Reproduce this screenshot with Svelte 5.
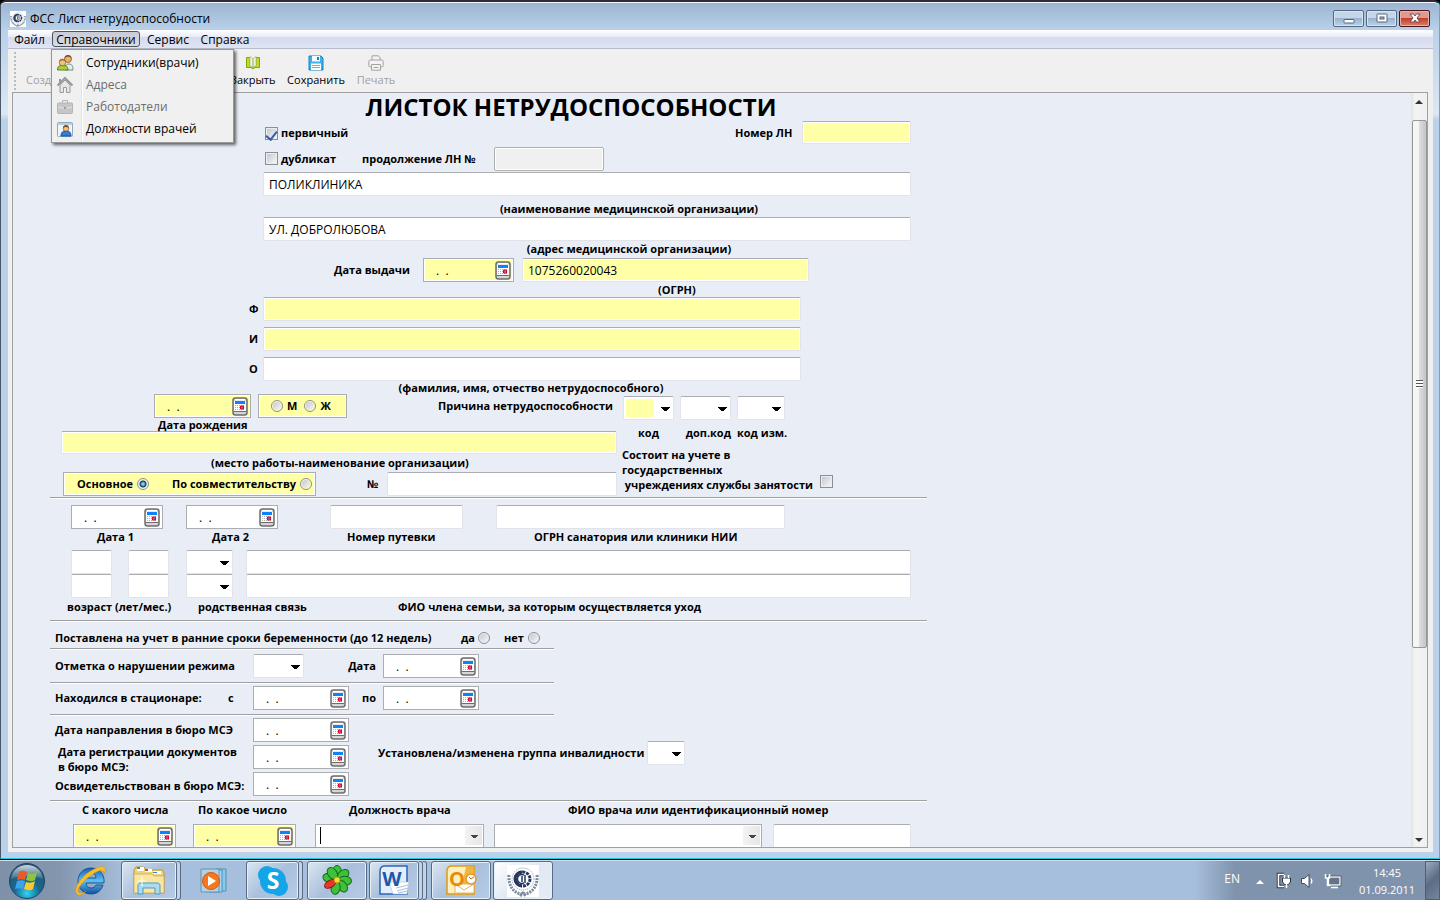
<script>
  const menus = ['Сервис', 'Справка'];
  const items = [
    { text: 'Сотрудники(врачи)', icon: 'people', off: false },
    { text: 'Адреса', icon: 'home', off: true },
    { text: 'Работодатели', icon: 'case', off: true },
    { text: 'Должности врачей', icon: 'card', off: false }
  ];
  let primary = $state(true);
  let job = $state('main');
</script>

{#snippet emblem(size)}
  <svg width={size} height={size} viewBox="0 0 32 32" aria-hidden="true">
    <rect width="32" height="32" fill="#fff" />
    <circle cx="16" cy="14" r="11" fill="none" stroke="#8d95a8" stroke-width="1" stroke-dasharray="1 1" />
    <circle cx="16" cy="14" r="7" fill="none" stroke="#26375f" stroke-width="3" stroke-dasharray="3 1" />
    <circle cx="15" cy="14" r="7" fill="none" stroke="#26375f" stroke-width="3" stroke-dasharray="22 44" transform="rotate(90 15 14)" />
    <path d="M17 10a4.500 4.500 0 1 0 0 8M15 11v6M18 10v8" fill="none" stroke="#26375f" stroke-width="1.500" />
    <path d="M2 10C1 20 6 28 15 29M30 10C31 20 26 28 17 29M13 31l3-3 3 3" fill="none" stroke="#7d879f" stroke-width="3" stroke-dasharray="2 1" />
  </svg>
{/snippet}

{#snippet date(name, yellow = false)}
  <span class="date" class:yellow>
    <input type="text" aria-label={name} value=" .  ." />
    <button type="button" aria-label="Календарь">
      <svg width="16" height="19" viewBox="0 0 16 19">
        <rect x="1" y="1" width="14" height="17" rx="2.500" fill="#d6d6d6" stroke="#6e6e6e" stroke-width="1.500" />
        <rect x="3" y="2" width="10" height="1.500" fill="#fff" />
        <rect x="2" y="4" width="12" height="10" fill="#fff" />
        <rect x="3" y="4" width="10" height="3" fill="#0a84f8" />
        <path d="M3 8.500h9M3 10.500h9M3 12.500h9" stroke="#b0b0b0" stroke-dasharray="1 1" />
        <rect x="8.500" y="9" width="3" height="3" rx=".5" fill="#5f7fe0" stroke="#f00018" stroke-width="1.200" />
        <path d="M1.500 14.500h13" stroke="#6e6e6e" />
      </svg>
    </button>
  </span>
{/snippet}

{#snippet stack()}<i class="stack"></i>{/snippet}

<div class="desktop">
  <div class="window">
    <header class="title">
      {@render emblem(16)}
      <span>ФСС Лист нетрудоспособности</span>
      <div class="controls">
        <button type="button" aria-label="Свернуть"><svg width="12" height="14" viewBox="0 0 12 14"><rect x="1" y="8.500" width="10" height="3.500" rx=".5" fill="#fff" stroke="#56657c" /></svg></button>
        <button type="button" aria-label="Развернуть"><svg width="12" height="14" viewBox="0 0 12 14"><rect x="1" y="3" width="10" height="8" rx=".5" fill="#fff" stroke="#56657c" /><rect x="4" y="6" width="4" height="2" fill="#9db5d0" stroke="#56657c" /></svg></button>
        <button type="button" class="close" aria-label="Закрыть окно"><svg width="12" height="14" viewBox="0 0 12 14"><path d="M1 3h3.500L6 5l1.500-2H11L8 7l3 4H7.500L6 9l-1.500 2H1l3-4z" fill="#fff" stroke="#5b4a55" stroke-width=".9" /></svg></button>
      </div>
    </header>

    <div class="client">
      <nav class="menubar">
        <button type="button">Файл</button>
        <div class="open">
          <button type="button" aria-expanded="true">Справочники</button>
          <div class="popup" role="menu">
            {#each items as item}
              <button type="button" role="menuitem" disabled={item.off}>
                <svg width="18" height="18" viewBox="0 0 18 18">
                  {#if item.icon === 'people'}
                    <path d="M9 16c0-4 1-6 4-6s4 2 4 6z" fill="#e4efe9" stroke="#6c8f86" />
                    <circle cx="12" cy="5" r="3.500" fill="#e8b46c" stroke="#6b4320" stroke-width=".7" />
                    <path d="M8.500 4C9 0 15 0 15.500 4 13 2 11 2 8.500 4z" fill="#7a4d22" />
                    <path d="M1.500 16c0-3.500 1-4.500 5-4.500s5.500 1 5.500 4.500z" fill="#a7cf3e" stroke="#5e8417" />
                    <circle cx="6.500" cy="8.500" r="3.300" fill="#f0c27e" stroke="#8a5a25" stroke-width=".7" />
                    <path d="M3 8C3 3.500 9.500 3.500 10 8 8 6 5 6 3 8z" fill="#a86d2c" />
                  {:else if item.icon === 'home'}
                    <path d="M4 9v7.500h3.500v-5h3v5H14V9L9 4z" fill="#e6e6e6" stroke="#9a9a9a" />
                    <path d="M1.500 9.500L9 2l7.500 7.500" fill="none" stroke="#9a9a9a" stroke-width="2" />
                    <path d="M4 3v3" stroke="#9a9a9a" stroke-width="2" />
                  {:else if item.icon === 'case'}
                    <path d="M6.500 5V2.500h5V5" fill="none" stroke="#b4b4b4" />
                    <rect x="1.500" y="5" width="15" height="10.500" rx="1" fill="#c6c6c6" stroke="#b4b4b4" />
                    <path d="M2 9c4 1.500 10 1.500 14 0" fill="none" stroke="#e4e4e4" />
                    <rect x="8" y="9" width="2" height="2" fill="#9b9b9b" />
                  {:else}
                    <rect x="1.500" y="2.500" width="15" height="14" rx="1" fill="#eef6fd" stroke="#8fa9bd" />
                    <path d="M2 4h14" stroke="#b9cfe0" stroke-width="2" />
                    <path d="M5 16c0-4 2-5 5-5s5 1 5 5z" fill="#2f7fd6" stroke="#16539b" />
                    <circle cx="10" cy="8.500" r="2.800" fill="#f0c27e" stroke="#7a4d22" stroke-width=".7" />
                    <path d="M7 8c0-4 6-4 6 0-2-1.500-4-1.500-6 0z" fill="#7a4d22" />
                  {/if}
                </svg>
                <span>{item.text}</span>
              </button>
            {/each}
          </div>
        </div>
        {#each menus as m}<button type="button">{m}</button>{/each}
      </nav>

      <div class="toolbar">
        <i class="grip"></i>
        <button type="button" class="create" disabled>Создать</button>
        <button type="button">
          <svg width="16" height="16" viewBox="0 0 16 16"><path d="M1.500 2.500v10H6l2 1.500 2-1.500h4.500v-10H11v8.500l-3 1-3-1V2.500z" fill="#c2dc22" stroke="#7da80c" /><path d="M5 1.500L7.500 3v9L5 11zM11 1.500L8.500 3v9l2.500-1z" fill="#f2f4e6" stroke="#b3bf7a" stroke-width=".7" /></svg>
          Закрыть
        </button>
        <button type="button">
          <svg width="16" height="16" viewBox="0 0 16 16"><path d="M1 1h12l2 2v12H1z" fill="#3eb0ea" stroke="#1683c4" /><path d="M4 1h8v5.500H4z" fill="#f4fbff" /><path d="M9 2h2v3H9z" fill="#1683c4" /><path d="M3 8.500h10V15H3z" fill="#fff" /><path d="M4 10.500h8M4 12.500h8" stroke="#5ab6e2" /></svg>
          Сохранить
        </button>
        <button type="button" disabled>
          <svg width="16" height="16" viewBox="0 0 16 16" fill="#f3f3f3" stroke="#a2a2a2"><path d="M4 5V.8h6.500L12 2.500V5" /><rect x=".8" y="5" width="14.400" height="7" rx="1.500" /><path d="M3.500 9.500h9v5.700h-9zM5.500 12.500h5" /></svg>
          Печать
        </button>
      </div>

      <main class="pane">
        <form class="sheet" autocomplete="off">
          <h1>ЛИСТОК НЕТРУДОСПОСОБНОСТИ</h1>

          <div class="row first">
            <input id="prim" type="checkbox" bind:checked={primary} />
            <label for="prim">первичный</label>
            <label for="num">Номер ЛН</label>
            <input id="num" class="yellow" type="text" />
          </div>
          <div class="row second">
            <input id="dup" type="checkbox" />
            <label for="dup">дубликат</label>
            <label for="cont">продолжение ЛН №</label>
            <input id="cont" type="text" disabled />
          </div>

          <div class="org">
            <input id="org" type="text" value="ПОЛИКЛИНИКА" />
            <label class="cap tall" for="org">(наименование медицинской организации)</label>
            <input id="addr" type="text" value="УЛ. ДОБРОЛЮБОВА" />
            <label class="cap" for="addr">(адрес медицинской организации)</label>
          </div>

          <div class="row issue">
            <span>Дата выдачи</span>
            {@render date('Дата выдачи', true)}
            <input id="ogrn" class="yellow" type="text" value="1075260020043" />
          </div>
          <label class="ogrn-cap" for="ogrn">(ОГРН)</label>

          <div class="person">
            <label for="f">Ф</label><input id="f" class="yellow" type="text" />
            <label for="i">И</label><input id="i" class="yellow" type="text" />
            <label for="o">О</label><input id="o" type="text" />
          </div>
          <p class="fio-cap">(фамилия, имя, отчество нетрудоспособного)</p>

          <section class="work">
            <div class="work-left">
              <div class="row birth">
                {@render date('Дата рождения', true)}
                <div class="box sex">
                  <input id="m" type="radio" name="sex" /><label for="m">М</label>
                  <input id="w" type="radio" name="sex" /><label for="w">Ж</label>
                </div>
                <span>Причина нетрудоспособности</span>
              </div>
              <p class="birth-cap">Дата рождения</p>
              <input id="emp" class="yellow emp" type="text" />
              <label class="emp-cap" for="emp">(место работы-наименование организации)</label>
              <div class="row job">
                <div class="box kind">
                  <label for="main">Основное</label>
                  <input id="main" type="radio" name="job" value="main" bind:group={job} />
                  <label for="part">По совместительству</label>
                  <input id="part" type="radio" name="job" value="part" bind:group={job} />
                </div>
                <label for="jobnum">№</label>
                <input id="jobnum" type="text" />
              </div>
            </div>
            <div class="work-right">
              <div class="codes">
                <select id="c1" class="code-y"><option></option></select>
                <select id="c2"><option></option></select>
                <select id="c3"><option></option></select>
                <label for="c1">код</label>
                <label for="c2">доп.код</label>
                <label for="c3">код изм.</label>
              </div>
              <div class="service">
                <label for="srv">Состоит на учете в<br />государственных<br />&nbsp;учреждениях службы занятости</label>
                <input id="srv" type="checkbox" />
              </div>
            </div>
          </section>

          <hr />
          <div class="row four">
            {@render date('Дата 1')}
            {@render date('Дата 2')}
            <input id="voucher" type="text" />
            <input id="clinic" type="text" />
          </div>
          <div class="row four-cap">
            <span>Дата 1</span><span>Дата 2</span>
            <label for="voucher">Номер путевки</label>
            <label for="clinic">ОГРН санатория или клиники НИИ</label>
          </div>

          <div class="family">
            {#each [1, 2] as n}
              <input class="age" type="text" aria-label="Возраст, лет {n}" />
              <input class="age" type="text" aria-label="Возраст, мес. {n}" />
              <select aria-label="Родственная связь {n}"><option></option></select>
              <input type="text" aria-label="ФИО члена семьи {n}" />
            {/each}
          </div>
          <div class="row family-cap">
            <span>возраст (лет/мес.)</span><span>родственная связь</span><span>ФИО члена семьи, за которым осуществляется уход</span>
          </div>

          <hr />
          <div class="row early">
            <span>Поставлена на учет в ранние сроки беременности (до 12 недель)</span>
            <label for="yes">да</label><input id="yes" type="radio" name="early" />
            <label for="no">нет</label><input id="no" type="radio" name="early" />
          </div>
          <hr class="short" />
          <div class="row period">
            <label for="viol">Отметка о нарушении режима</label><span></span>
            <select id="viol"><option></option></select>
            <span>Дата</span>
            {@render date('Дата нарушения')}
          </div>
          <hr class="short" />
          <div class="row period stay">
            <span>Находился в стационаре:</span><span>с</span>
            {@render date('В стационаре с')}
            <span>по</span>
            {@render date('В стационаре по')}
          </div>
          <hr class="short" />
          <section class="mse">
            <span>Дата направления в бюро МСЭ</span>
            {@render date('Дата направления')}
            <span></span><span></span>
            <span class="low two">Дата регистрации документов<br />в бюро МСЭ:</span>
            {@render date('Дата регистрации')}
            <label class="high" for="grp">Установлена/изменена группа инвалидности</label>
            <select class="high" id="grp"><option></option></select>
            <span class="low">Освидетельствован в бюро МСЭ:</span>
            {@render date('Дата освидетельствования')}
          </section>
          <hr />
          <div class="row doc-cap">
            <span>С какого числа</span><span>По какое число</span><label for="post">Должность врача</label><label for="doc">ФИО врача или идентификационный номер</label>
          </div>
          <div class="row doc">
            {@render date('С какого числа', true)}
            {@render date('По какое число', true)}
            <span class="combo caret"><select id="post"><option></option></select></span>
            <span class="combo"><select id="doc"><option></option></select></span>
            <input type="text" aria-label="Идентификационный номер" />
          </div>
        </form>

        <div class="scroll" aria-hidden="true">
          <i class="up"></i>
          <div class="thumb"><i></i></div>
          <i class="down"></i>
        </div>
      </main>
    </div>
  </div>

  <footer class="taskbar">
    <button type="button" class="start" aria-label="Пуск">
      <svg width="38" height="38" viewBox="0 0 38 38">
        <defs>
          <radialGradient id="orb" cx=".5" cy=".85" r=".8"><stop offset="0" stop-color="#2fd3f4" /><stop offset=".45" stop-color="#17688f" /><stop offset="1" stop-color="#2b5272" /></radialGradient>
          <linearGradient id="gl" x2="0" y2="1"><stop offset="0" stop-color="#fff" stop-opacity=".75" /><stop offset="1" stop-color="#fff" stop-opacity=".1" /></linearGradient>
        </defs>
        <circle cx="19" cy="19" r="17.500" fill="url(#orb)" stroke="#1b4560" />
        <path d="M3 17C4 8 11 3 19 3s15 5 16 14c-8-4-24-4-32 0z" fill="url(#gl)" />
        <path d="M11 10c3-2 5-1 8 0l-2 8c-3-1-5-1-8 0z" fill="#ee5a24" />
        <path d="M20 11c3 1 6 1 9-1l-2 8c-3 2-6 1-9 0z" fill="#8cc63f" />
        <path d="M9 19c3-1 5-1 8 0l-2 8c-3-1-5-1-8 0z" fill="#3fa2e8" />
        <path d="M18 20c3 1 6 1 9-1l-2 8c-3 2-6 1-9 0z" fill="#fdc82f" />
      </svg>
    </button>
    <button type="button" class="plain ie" aria-label="Internet Explorer">
      <svg width="34" height="34" viewBox="0 0 34 34">
        <defs><linearGradient id="ieb" x2="0" y2="1"><stop offset="0" stop-color="#1a5fb4" /><stop offset=".5" stop-color="#5cc1f5" /><stop offset="1" stop-color="#114e9e" /></linearGradient></defs>
        <path d="M18 4C10 4 5 10 5 17s5 13 13 13c6 0 10-3 12-9h-7c-1 2-3 3-5 3-3 0-5-2-5-5h18C32 10 26 4 18 4zM13 14c0-3 2-5 5-5s5 2 5 5z" fill="url(#ieb)" stroke="#0c4284" stroke-width=".8" />
        <path d="M5 31C-1 27 6 15 16 8 24 3 31 1 32 4c1 2 0 4-1 6 1-6-6-4-14 2C8 19 1 29 8 29c2 0 4-1 5-2-2 3-6 5-8 4z" fill="#f6bf2c" stroke="#c98d10" stroke-width=".5" />
      </svg>
    </button>
    <button type="button" class="task" aria-label="Проводник">
      <svg width="34" height="34" viewBox="0 0 34 34">
        <path d="M2 6l2-3h8l2 3h16l2 2v21H2z" fill="#eed27c" stroke="#b9953b" />
        <path d="M5 3h7v4H5z" fill="#fff" /><path d="M5 3h3v2H5z" fill="#2fa84a" /><path d="M13 5h7v3h-7z" fill="#fff" /><path d="M13 5h3v2h-3z" fill="#d4472f" /><path d="M21 7h8v3h-8z" fill="#fff" /><path d="M21 8h4v1h-4z" fill="#2b84d6" />
        <path d="M2 10h18l2 2h10v17H2z" fill="#f8e6a2" stroke="#c7a650" stroke-width=".7" />
        <path d="M6 30V22c0-2 1-3 3-3h16c2 0 3 1 3 3v8h-5v-6H11v6z" fill="#a9dcf2" stroke="#4e9cc0" />
        <path d="M10 13v9M6 17h8" stroke="#fff" />
      </svg>
    </button>
    {@render stack()}
    <button type="button" class="plain wmp" aria-label="Проигрыватель">
      <svg width="32" height="32" viewBox="0 0 32 32">
        <path d="M18 4h10v22H18z" fill="#8ec7e6" stroke="#4d92b8" /><path d="M11 5h13v22H11z" fill="#a9d6ee" stroke="#4d92b8" /><path d="M3 4h18v23H3z" fill="#b6cfe2" stroke="#6292b3" />
        <circle cx="13" cy="16" r="8.500" fill="#f5781e" stroke="#d65a0b" /><path d="M10 11v10l8-5z" fill="#fff" />
      </svg>
    </button>
    <button type="button" class="task skype" aria-label="Skype">
      <svg width="32" height="32" viewBox="0 0 32 32">
        <circle cx="10" cy="10" r="9" fill="#12a5e8" /><circle cx="22" cy="22" r="9" fill="#12a5e8" /><circle cx="16" cy="16" r="13" fill="#12a5e8" />
        <text x="16" y="24" text-anchor="middle" font-size="23" font-weight="bold" fill="#fff">S</text>
      </svg>
    </button>
    {@render stack()}
    <button type="button" class="task gap" aria-label="ICQ">
      <svg width="34" height="34" viewBox="0 0 34 34">
        {#each [0, 50, 95, 140, 190, 285, 325] as a}
          <ellipse cx="17" cy="8" rx="4.500" ry="6.500" fill="#3ec13a" stroke="#146a17" transform="rotate({a} 17 16)" />
        {/each}
        <ellipse cx="17" cy="8" rx="3.500" ry="6" fill="#e8362b" stroke="#8d150f" transform="rotate(240 17 16)" />
        <circle cx="17" cy="16" r="3" fill="#ffd83a" stroke="#c98d10" />
      </svg>
    </button>
    <button type="button" class="task narrow" aria-label="Word">
      <svg width="34" height="34" viewBox="0 0 34 34">
        <path d="M8 2h22v28H3V7c0-3 2-5 5-5z" fill="#e4eefb" stroke="#2b66b8" stroke-width="1.500" /><path d="M12 18h20l-2 12H16z" fill="#fff" stroke="#a8bddb" stroke-width=".6" />
        <path d="M19 24l12-3M20 27l11-3M21 29l9-2" stroke="#a8bddb" />
        <text x="15" y="22" text-anchor="middle" font-size="20" font-weight="bold" fill="#1d57a8">W</text>
      </svg>
    </button>
    {@render stack()}{@render stack()}
    <button type="button" class="task gap" aria-label="Outlook">
      <svg width="34" height="34" viewBox="0 0 34 34">
        <path d="M8 2h22v28H3V7c0-3 2-5 5-5z" fill="#fdf0c0" stroke="#e09b12" stroke-width="1.500" /><path d="M22 3h7v26H16z" fill="#f4b63a" /><path d="M11 20h19v9H11z" fill="#fff" stroke="#e3b45a" /><path d="M11 20l9 6 10-6" fill="none" stroke="#e3b45a" />
        <circle cx="27" cy="15" r="5" fill="#fff" stroke="#e2972a" stroke-width="1.500" /><path d="M25 13l2 2 3-2" fill="none" stroke="#b8701c" />
        <text x="13" y="22" text-anchor="middle" font-size="20" font-weight="bold" fill="#e88a0c">O</text>
      </svg>
    </button>
    <button type="button" class="task active" aria-label="ФСС">{@render emblem(32)}</button>

    <div class="tray">
      <span class="lang">EN</span>
      <i class="more"></i>
      <svg width="16" height="18" viewBox="0 0 16 18"><path d="M8 2.500H2.500v12H8" fill="none" stroke="#2a3542" stroke-width="3.500" /><path d="M8 2.500H2.500v12H8" fill="none" stroke="#fff" stroke-width="1.600" /><path d="M6.500 6h8v4l-2 2.500h-4l-2-2.500z" fill="#fff" stroke="#2a3542" /><path d="M8.500 3v3M12.500 3v3M10.500 12v4" stroke="#fff" stroke-width="1.500" /></svg>
      <svg width="16" height="18" viewBox="0 0 16 18"><path d="M1.500 6.500h3L9 2.500v13l-4.500-4h-3z" fill="#fff" stroke="#3c4a5c" /><path d="M11 6.500c1 1.500 1 3.500 0 5" fill="none" stroke="#fff" stroke-width="1.300" /></svg>
      <svg width="17" height="18" viewBox="0 0 17 18"><rect x="4.500" y="5" width="11.500" height="8" fill="#6d7f95" stroke="#2a3542" stroke-width="2.500" /><rect x="4.500" y="5" width="11.500" height="8" fill="#61748b" stroke="#fff" stroke-width="1.300" /><path d="M7 15.500h7" stroke="#fff" stroke-width="1.600" /><path d="M1.500 2v4h4V2M3.500 6v7.500h3" fill="none" stroke="#fff" stroke-width="1.500" /></svg>
      <div class="clock"><span>14:45</span><span>01.09.2011</span></div>
    </div>
    <i class="peek"></i>
  </footer>
</div>

<style>
  :global(body) { margin: 0; background: #000; }
  .desktop { display: flex; flex-direction: column; height: 100vh; overflow: hidden; font: 12px/16px "Open Sans", "Noto Sans", sans-serif; color: #000; }
  .desktop * { box-sizing: border-box; }
  button, input, select { font: inherit; color: inherit; margin: 0; }
  button { padding: 0; border: 0; background: none; }
  svg { flex: none; overflow: visible; }
  h1, p { margin: 0; }

  .window { flex: 1; min-height: 0; display: flex; flex-direction: column; margin-bottom: 1px; padding: 0 6px 6px 7px; border: 1px solid #20c8de; border-top: 2px solid #2c2c3c; border-left-color: #4a5868; border-radius: 6px 6px 0 0; background: linear-gradient(#9ab4d1, #b9d1ea 28px, #dbe7f4 112px, #b9d1ea 118px); box-shadow: inset 0 1px #f2f7fc; }
  .title { display: flex; align-items: center; height: 28px; flex: none; gap: 4px; padding: 5px 2px 0; }
  .title span { flex: 1; }
  .controls { display: flex; gap: 2px; padding: 0 1px 1px 0; }
  .controls button { display: flex; align-items: center; justify-content: center; width: 31px; height: 17px; border: 1px solid #55677f; border-radius: 2px; background: linear-gradient(#c3d6ea 45%, #99b3cf 50%, #bcd3ea); box-shadow: inset 0 0 0 1px #d8e6f4; }
  .controls .close { border-color: #4b1420; background: linear-gradient(#e0998d 45%, #c1402a 50%, #d88269); box-shadow: inset 0 0 0 1px #eab2a6; }

  .client { flex: 1; min-height: 0; display: flex; flex-direction: column; background: #f0f0f0; }
  .menubar { display: flex; align-items: stretch; height: 19px; flex: none; background: linear-gradient(#fff, #e8ecf6 36%, #d5dbed 40%, #e0e5f5); border-bottom: 1px solid #b6bccc; }
  .menubar > button { line-height: 20px; }
  .menubar > button:first-child { width: 43px; }
  .menubar > button:nth-child(3) { width: 54px; }
  .menubar > button:nth-child(4) { width: 60px; }
  .open { position: relative; width: 90px; display: flex; }
  .open > button { margin: 1px; width: 88px; line-height: 16px; border: 1px solid #50545c; border-radius: 3px; background: linear-gradient(#c9ccd6, #d9dce6); }
  .popup { position: absolute; z-index: 2; top: 19px; left: 0; width: 183px; padding: 2px; border: 1px solid #979797; background: linear-gradient(90deg, transparent 29px, #e2e3e3 29px, #e2e3e3 30px, #fff 30px, #fff 31px, transparent 31px) #f0f0f0; box-shadow: 2px 2px 3px #0009; }
  .popup button { display: flex; align-items: center; width: 100%; height: 22px; gap: 12px; padding-left: 2px; }
  .popup button:disabled { color: #6d6d6d; }
  .toolbar { display: grid; grid-template-columns: 18px 197px 60px 66px 54px; height: 43px; flex: none; align-items: end; font-size: 11px; }
  .toolbar button { display: flex; flex-direction: column; align-items: center; gap: 1px; padding-bottom: 4px; }
  .toolbar .create { align-items: flex-start; }
  .toolbar button:disabled { color: #a0a0a0; }
  .grip { width: 2px; height: 38px; margin: 0 6px 2px; background: repeating-linear-gradient(#bbb 0 2px, transparent 2px 4px); }

  .pane { flex: 1; min-height: 0; display: flex; margin: 0 5px 4px 4px; border: 1px solid #a0a0a0; background: #e9eef6; overflow: hidden; }
  .sheet { flex: 1; min-width: 0; padding-left: 35px; font-size: 11px; font-weight: bold; white-space: nowrap; overflow: hidden; }
  .scroll { width: 16px; display: flex; flex-direction: column; align-items: center; background: linear-gradient(90deg, #e3e3e3, #f3f3f3 4px, #f0f0f0); }
  .up, .down { border: 4px solid transparent; }
  .up { border-bottom-color: #333; margin: 3px 0 16px; }
  .down { border-top-color: #333; margin: auto 0 1px; }
  .thumb { flex: none; width: 15px; height: 70%; border: 1px solid #979797; border-radius: 2px; background: linear-gradient(90deg, #f5f5f5 45%, #dcdcdf 50%, #c5c5ca); display: grid; place-items: center; }
  .thumb i { width: 7px; height: 8px; background: repeating-linear-gradient(#555 0 1px, #fff 1px 3px); }

  h1 { width: 1046px; max-width: 100%; height: 28px; font-size: 24px; line-height: 28px; text-align: center; }
  .row { display: grid; align-items: center; }
  input[type='text'], select { width: 100%; height: 24px; padding: 0 5px; font-size: 12px; font-weight: normal; border: 1px solid #e2e3ea; border-top-color: #abadb3; border-radius: 2px; background-color: #fff; outline: 0; }
  input.yellow[type='text'] { background: #ffffa6; box-shadow: inset 0 0 0 1px #fff; }
  input:disabled[type='text'] { background: #f0f0f0; border: 1px solid #afafaf; box-shadow: inset 0 0 0 1px #fff; }
  select { appearance: none; background-image: linear-gradient(#000, #000), linear-gradient(#000, #000), linear-gradient(#000, #000), linear-gradient(#000, #000); background-repeat: no-repeat; background-size: 9px 1px, 7px 1px, 5px 1px, 3px 1px; background-position: right 3px top 10px, right 4px top 11px, right 5px top 12px, right 6px top 13px; }
  input[type='checkbox'], input[type='radio'] { appearance: none; flex: none; width: 13px; height: 13px; border: 1px solid #8e8f8f; background: linear-gradient(135deg, #c4c8ce, #f6f6f6) content-box #f4f4f4; padding: 1px; }
  input[type='radio'] { width: 12px; height: 12px; border-radius: 50%; }
  input[type='radio']:checked { background: radial-gradient(circle, #7fd0f0 0 1px, #14384f 3px, #f0f4f7 4px); }
  input[type='checkbox']:checked { display: grid; place-items: center; }
  input[type='checkbox']:checked::before { content: ''; width: 5px; height: 9px; margin-bottom: 2px; border: solid #3c5aa0; border-width: 0 2px 2px 0; transform: rotate(38deg); }

  .date { display: flex; align-items: center; width: 96px; height: 24px; padding: 0 1px 0 7px; border: 1px solid #abadb3; background: #fff; }
  .date.yellow { background: #ffffa6; box-shadow: inset 0 0 0 1px #fff; }
  .date input[type='text'] { flex: 1; min-width: 0; height: 18px; padding: 0 2px; border: 0; background: none; white-space: pre; }
  .date button { height: 20px; width: 18px; flex: none; }
  .date svg { display: block; margin: auto; }
  .box { display: flex; align-items: center; gap: 4px; height: 24px; background: #ffffa6; border: 1px solid #abadb3; box-shadow: inset 0 0 0 1px #fff; }
  hr { width: 877px; height: 2px; margin: 0 0 0 2px; border: 0; border-top: 1px solid #a0a0a0; background: #fff; }
  .short { width: 504px; }

  .first { grid-template-columns: 16px 454px 67px 109px; padding-left: 217px; height: 24px; }
  .first input[type='text'] { align-self: start; height: 23px; }
  .second { grid-template-columns: 16px 81px 132px 110px; padding-left: 217px; height: 27px; }
  .org { display: flex; flex-direction: column; width: 863px; padding-left: 215px; }
  .cap { text-align: center; padding-left: 84px; height: 17px; line-height: 15px; }
  .tall { height: 21px; line-height: 26px; }
  .issue { grid-template-columns: 89px 99px 287px; padding-left: 286px; }
  .issue .date { width: 91px; }
  .ogrn-cap { display: block; padding-left: 610px; height: 15px; }
  .person { display: grid; grid-template-columns: 14px 538px; gap: 6px 0; padding-left: 201px; align-items: center; }
  .fio-cap { width: 966px; height: 13px; line-height: 13px; text-align: center; }
  .work { display: grid; grid-template-columns: 569px 310px; height: 103px; }
  .birth { grid-template-columns: 104px 180px 174px; padding-left: 106px; height: 24px; }
  .birth .date { width: 97px; }
  .sex { width: 89px; padding-left: 12px; }
  .sex label + input { margin-left: 3px; }
  .birth-cap { padding-left: 110px; height: 13px; line-height: 14px; }
  .emp.yellow[type='text'] { display: block; width: 556px; height: 23px; margin-left: 13px; }
  .emp-cap { display: block; padding-left: 163px; height: 18px; line-height: 18px; }
  .job { grid-template-columns: 304px 20px 230px; padding-left: 15px; }
  .kind { width: 253px; padding-left: 13px; }
  .kind input + label { margin-left: 19px; }
  .codes { display: grid; grid-template-columns: 51px 51px 48px; grid-template-rows: 25px 25px; column-gap: 6px; padding: 1px 0 0 6px; align-items: center; }
  .codes label { text-align: right; }
  .codes label:nth-of-type(1) { text-align: center; }
  .code-y { box-shadow: inset 2px 0 #fff, inset 0 2px #fff, inset 0 -2px #fff, inset 30px 0 #ffffa6; }
  .service { display: flex; align-items: end; justify-content: space-between; width: 216px; padding: 2px 0 0 5px; line-height: 15px; }
  .service input { margin-bottom: 4px; }

  .four { grid-template-columns: 115px 144px 166px 289px; padding: 6px 0 0 23px; }
  .four .date { width: 92px; }
  .four #voucher { width: 133px; }
  .four-cap { grid-template-columns: 115px 135px 187px 250px; padding-left: 49px; height: 21px; align-items: start; }
  .family { display: grid; grid-template-columns: 57px 58px 60px 665px; padding-left: 23px; }
  .family .age[type='text'] { width: 41px; }
  .family select { width: 47px; }
  .family-cap { grid-template-columns: 131px 200px 310px; padding-left: 19px; height: 22px; align-items: start; line-height: 18px; }
  .early { grid-template-columns: 406px 17px 26px 24px 13px; padding-left: 7px; height: 26px; padding-top: 5px; }
  .period { grid-template-columns: 173px 25px 110px 20px 96px; padding: 4px 0 4px 7px; }
  .stay { padding-top: 2px; }
  .period select { width: 51px; }
  .period span:nth-child(4) { justify-self: end; margin-right: 7px; }
  .mse { display: grid; grid-template-columns: 198px 125px 269px 38px; grid-template-rows: repeat(3, 24px); row-gap: 3px; align-items: center; padding: 2px 0 4px 7px; }
  .low { padding-top: 4px; }
  .high { margin-bottom: 9px; }
  .two { padding-left: 3px; line-height: 15px; }
  .doc-cap { grid-template-columns: 116px 151px 219px 260px; padding-left: 34px; height: 22px; align-items: start; }
  .doc { grid-template-columns: 120px 122px 179px 279px 138px; padding-left: 25px; }
  .doc .date { width: 103px; }
  .combo { display: block; width: 169px; height: 24px; }
  .combo + .combo { width: 268px; }
  .combo select { border: 1px solid #abadb3; border-radius: 0; background-image: linear-gradient(#444, #444), linear-gradient(#444, #444), linear-gradient(#444, #444), linear-gradient(90deg, #f3f3f3, #e6e6e6); background-size: 7px 1px, 5px 1px, 3px 1px, 17px 19px; background-position: right 5px top 10px, right 6px top 11px, right 7px top 12px, right 1px top 1px; }
  .combo.caret select { background-image: linear-gradient(#444, #444), linear-gradient(#444, #444), linear-gradient(#444, #444), linear-gradient(90deg, #f3f3f3, #e6e6e6), linear-gradient(#000, #000); background-size: 7px 1px, 5px 1px, 3px 1px, 17px 19px, 1px 17px; background-position: right 5px top 10px, right 6px top 11px, right 7px top 12px, right 1px top 1px, left 4px top 2px; }

  .taskbar { display: flex; align-items: stretch; height: 40px; flex: none; border-top: 1px solid #d1dceb; background: linear-gradient(90deg, #7f91a8, #8496ae 60px, #a6bfdc 125px, #a6bfdc calc(100% - 245px), #7f93ac calc(100% - 205px)); font-size: 12px; }
  .taskbar button { display: flex; align-items: center; justify-content: center; }
  .start { width: 54px; }
  .ie { width: 67px; padding-left: 4px; }
  .wmp { width: 65px; }
  .task { width: 56px; border: 1px solid #596b84; border-radius: 3px; background: linear-gradient(135deg, #dbe6f2, #a9bfdb 50%, #b5cbe6); box-shadow: inset 0 0 0 1px #e6eef8; }
  .skype { width: 53px; }
  .gap { margin-left: 4px; width: 60px; }
  .narrow { width: 50px; margin-left: 2px; }
  .active { width: 60px; margin-left: 2px; background: linear-gradient(135deg, #fff, #dfe8f3 50%, #e3ecf7); }
  .stack { width: 4px; border: 1px solid #596b84; border-left: 0; border-radius: 0 3px 3px 0; background: #c3d3e7; }
  .tray { display: flex; align-items: center; gap: 8px; margin-left: auto; color: #fff; line-height: 17px; }
  .lang { margin-right: 8px; padding-bottom: 5px; }
  .more { border: 4px solid transparent; border-bottom: 4px solid #fff; margin-top: -2px; margin-right: 4px; }
  .clock { display: flex; flex-direction: column; align-items: center; width: 76px; font-size: 11px; }
  .peek { width: 15px; border: 1px solid #4f5f73; background: linear-gradient(135deg, #9dabbd, #5c6c82 50%, #74869d); }
</style>
